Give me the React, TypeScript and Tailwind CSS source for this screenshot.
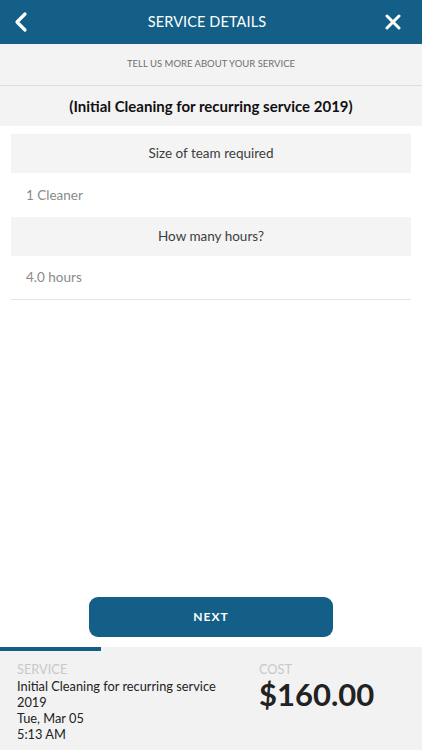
const BRAND = "bg-[#135f87]";

function BackIcon() {
    return (
        <svg width="16" height="22" viewBox="0 0 16 22" fill="none">
            <path d="M12 3 L4 11 L12 19" stroke="white" strokeWidth="3.2" strokeLinecap="round" strokeLinejoin="round" />
        </svg>
    );
}

function CloseIcon() {
    return (
        <svg width="16" height="16" viewBox="0 0 16 16" fill="none">
            <path d="M2 2 L14 14 M14 2 L2 14" stroke="white" strokeWidth="3" strokeLinecap="round" />
        </svg>
    );
}

function Question({ label }: { label: string }) {
    return (
        <div className="h-[39px] bg-[#f4f4f4] flex items-center justify-center text-[13.5px] text-[#3d3d3d]">
            {label}
        </div>
    );
}

function Answer({ value, border }: { value: string; border?: boolean }) {
    return (
        <div className={`h-[44px] flex items-center pl-[15px] text-[13.5px] text-[#8a8a8a] ${border ? "border-b border-[#e6e6e6]" : ""}`}>
            {value}
        </div>
    );
}

export default function App() {
    return (
        <div
            className="w-[422px] h-[750px] bg-white flex flex-col overflow-hidden"
            style={{ fontFamily: "Lato, 'Open Sans', sans-serif" }}
        >
            <div className={`h-[44px] ${BRAND} flex items-center justify-between pl-[9px] pr-[17px] shrink-0`}>
                <div className="w-[24px] flex items-center justify-center"><BackIcon /></div>
                <span className="text-white text-[14.5px] tracking-[0.1px]">SERVICE DETAILS</span>
                <div className="w-[24px] flex items-center justify-center"><CloseIcon /></div>
            </div>
            <div className="h-[42px] bg-[#f3f3f3] flex items-center justify-center text-[9.5px] text-[#6f6f6f] border-b border-[#dedede] shrink-0">
                TELL US MORE ABOUT YOUR SERVICE
            </div>
            <div className="h-[40px] bg-[#f3f3f3] flex items-center justify-center text-[15px] font-bold text-[#111] shrink-0">
                (Initial Cleaning for recurring service 2019)
            </div>
            <div className="px-[11px] pt-[8px] flex flex-col">
                <Question label="Size of team required" />
                <Answer value="1 Cleaner" />
                <Question label="How many hours?" />
                <Answer value="4.0 hours" border />
            </div>
            <div className="flex-1" />
            <div className="flex justify-center pb-[10px]">
                <button className={`w-[244px] h-[40px] rounded-[9px] ${BRAND} text-white text-[12px] font-bold tracking-[1px]`}>
                    NEXT
                </button>
            </div>
            <div className="bg-[#f2f2f2] h-[103px] shrink-0 flex flex-col">
                <div className="h-[4px] w-[101px] bg-[#135f87]" />
                <div className="flex pl-[17px] pt-[10px]">
                    <div className="w-[230px] pr-[24px] text-[12.8px] leading-[16px] text-[#222]">
                        <div className="text-[#c8c8c8] mb-[1px]">SERVICE</div>
                        <div>Initial Cleaning for recurring service 2019</div>
                        <div>Tue, Mar 05</div>
                        <div>5:13 AM</div>
                    </div>
                    <div className="flex flex-col ml-[12px]">
                        <div className="text-[12.8px] leading-[16px] text-[#c8c8c8]">COST</div>
                        <div className="text-[31px] leading-[34px] font-bold text-[#222]">$160.00</div>
                    </div>
                </div>
            </div>
        </div>
    );
}
